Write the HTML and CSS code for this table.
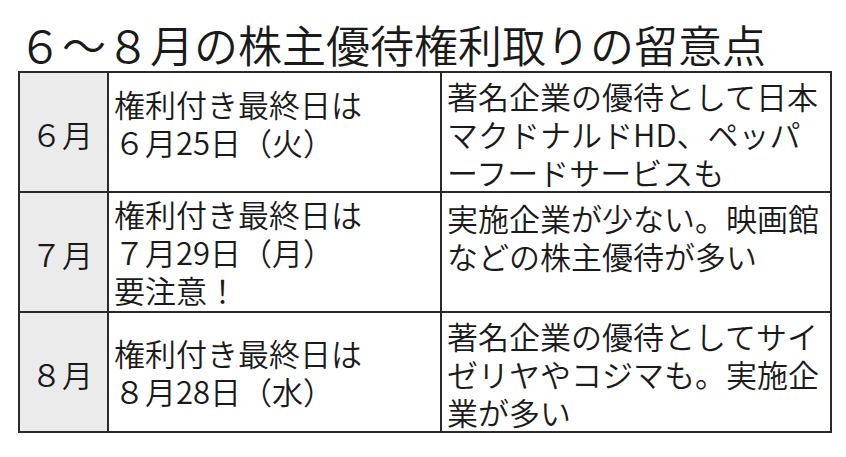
FILE: index.html
```html
<!DOCTYPE html>
<html lang="ja">
<head>
<meta charset="utf-8">
<title>６～８月の株主優待権利取りの留意点</title>
<link rel="stylesheet" href="styles.css">
</head>
<body>
<div class="page">
  <h1 class="title">６～８月の株主優待権利取りの留意点</h1>
  <div class="grid">
    <div class="cell month">６月</div>
    <div class="cell date date-first">権利付き最終日は<br>６月25日（火）</div>
    <div class="cell note">著名企業の優待として日本<br>マクドナルドHD、ペッパ<br>ーフードサービスも</div>

    <div class="cell month">７月</div>
    <div class="cell date">権利付き最終日は<br>７月29日（月）<br>要注意！</div>
    <div class="cell note note-mid">実施企業が少ない。映画館<br>などの株主優待が多い</div>

    <div class="cell month">８月</div>
    <div class="cell date">権利付き最終日は<br>８月28日（水）</div>
    <div class="cell note">著名企業の優待としてサイ<br>ゼリヤやコジマも。実施企<br>業が多い</div>
  </div>
</div>
</body>
</html>
```

FILE: styles.css
```css
html, body {
  margin: 0;
  padding: 0;
  background: #ffffff;
}

body {
  font-family: "Noto Sans CJK JP", "Noto Sans", sans-serif;
  font-weight: 350;
  color: #1a1a1a;
}

.page {
  width: 846px;
  height: 457px;
  padding: 22px 0 0 18px;
  box-sizing: border-box;
}

.title {
  margin: 0 0 5px 0;
  font-size: 44px;
  line-height: 44px;
  font-weight: 350;
  white-space: nowrap;
}

.grid {
  display: grid;
  grid-template-columns: 87px 331px 388px;
  grid-template-rows: 118px 118px 118px;
  gap: 2px;
  padding: 2px;
  width: 814px;
  box-sizing: border-box;
  background: #2a2a2a;
}

.cell {
  background: #ffffff;
  font-size: 31px;
  line-height: 38px;
  white-space: nowrap;
}

.month {
  background: #ebebeb;
  display: flex;
  align-items: center;
  justify-content: center;
  padding: 4px 3px 0 0;
}

.date {
  display: flex;
  flex-direction: column;
  justify-content: center;
  padding-left: 5px;
}

.date-first {
  padding-bottom: 18px;
}

.note {
  padding: 4px 0 0 5px;
}

.note-mid {
  padding-top: 6px;
}
```
